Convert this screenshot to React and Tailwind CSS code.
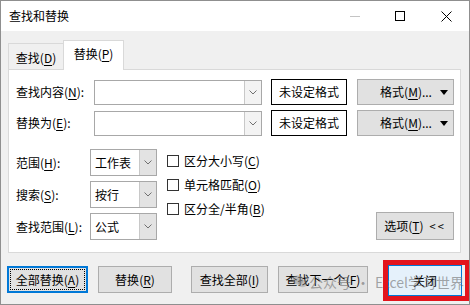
import React from "react";

const font = { fontFamily: '"Noto Sans CJK SC", "Noto Sans", sans-serif' };

function Chevron() {
  return (
    <svg width="8" height="5" viewBox="0 0 8 5" fill="none">
      <path d="M0.5 0.5 L4 4 L7.5 0.5" stroke="#707070" strokeWidth="1" />
    </svg>
  );
}

function Key({ k }) {
  return (
    <>
      (<u className="underline-offset-2">{k}</u>)
    </>
  );
}

function Combo({ w, h, text, editable }) {
  return (
    <div className={`flex ${w} ${h} border border-[#a8a8a8] bg-white`}>
      <div className="flex-1 flex items-center pl-[4px] text-[12px]">{text}</div>
      <div
        className={`w-[17px] flex items-center justify-center border-l border-[#c8c8c8] ${
          editable ? "bg-[#f3f3f3]" : "bg-[#e3e3e3]"
        }`}
      >
        <Chevron />
      </div>
    </div>
  );
}

function FormatButton() {
  return (
    <div className="w-[97px] h-[26px] ml-[10px] flex items-center bg-[#e1e1e1] border border-[#adadad] text-[12px]">
      <span className="flex-1 text-center pl-[14px]">
        格式<Key k="M" />...
      </span>
      <svg width="8" height="5" viewBox="0 0 8 5" className="mr-[5px]">
        <path d="M0 0 H8 L4 5 Z" fill="#000" />
      </svg>
    </div>
  );
}

function Checkbox({ label, k }) {
  return (
    <div className="h-[24px] flex items-center text-[12px]">
      <div className="w-[12px] h-[12px] border border-[#333] bg-white mr-[5px]" />
      <span>
        {label}
        <Key k={k} />
      </span>
    </div>
  );
}

function Btn({ children, className }) {
  return (
    <div
      className={`h-[27px] flex items-center justify-center bg-[#e1e1e1] border border-[#adadad] text-[12px] ${className}`}
    >
      {children}
    </div>
  );
}

export default function App() {
  return (
    <div
      className="relative w-[470px] h-[305px] flex flex-col border border-[#8f8f8f] overflow-hidden text-black"
      style={font}
    >
      {/* title bar */}
      <div className="h-[30px] bg-white flex items-center">
        <span className="pl-[8px] text-[12px]">查找和替换</span>
        <div className="ml-auto flex items-center">
          <div className="w-[10px] h-px bg-[#c4c4c4] mr-[35px]" />
          <div className="w-[10px] h-[10px] border border-black mr-[36px]" />
          <svg width="11" height="11" viewBox="0 0 11 11" className="mr-[17px]">
            <path d="M0.5 0.5 L10.5 10.5 M10.5 0.5 L0.5 10.5" stroke="#000" strokeWidth="1" />
          </svg>
        </div>
      </div>

      {/* body */}
      <div className="flex-1 bg-[#f0f0f0] px-[7px] flex flex-col">
        {/* tabs */}
        <div className="flex items-end h-[30px] mt-[9px] -mb-px">
          <div className="w-[56px] h-[27px] border border-b-0 border-[#d9d9d9] flex items-center justify-center text-[12px] pt-[1px]">
            查找<Key k="D" />
          </div>
          <div className="relative z-10 w-[61px] h-[30px] -ml-px bg-white border border-b-0 border-[#d9d9d9] flex items-center justify-center text-[12px] pb-[3px]">
            替换<Key k="P" />
          </div>
        </div>

        {/* panel */}
        <div className="w-[453px] h-[184px] bg-white border border-[#d9d9d9] flex flex-col pl-[7px] pt-[9px]">
          <div className="flex items-center h-[26px]">
            <span className="w-[78px] text-[12px]">
              查找内容<Key k="N" />:
            </span>
            <Combo w="w-[168px]" h="h-[25px]" editable />
            <div className="w-[76px] h-[26px] ml-[9px] border border-black flex items-center justify-center text-[12px]">
              未设定格式
            </div>
            <FormatButton />
          </div>
          <div className="flex items-center h-[26px] mt-[5px]">
            <span className="w-[78px] text-[12px]">
              替换为<Key k="E" />:
            </span>
            <Combo w="w-[168px]" h="h-[25px]" editable />
            <div className="w-[76px] h-[26px] ml-[9px] border border-black flex items-center justify-center text-[12px]">
              未设定格式
            </div>
            <FormatButton />
          </div>

          <div className="flex flex-1 mt-[13px]">
            <div className="flex flex-col gap-[5px]">
              {[
                ["范围", "H", "工作表"],
                ["搜索", "S", "按行"],
                ["查找范围", "L", "公式"],
              ].map(([l, k, v]) => (
                <div key={k} className="flex items-center h-[27px]">
                  <span className="w-[74px] text-[12px]">
                    {l}
                    <Key k={k} />:
                  </span>
                  <Combo w="w-[67px]" h="h-[27px]" text={v} />
                </div>
              ))}
            </div>
            <div className="flex flex-col ml-[10px]">
              <Checkbox label="区分大小写" k="C" />
              <Checkbox label="单元格匹配" k="O" />
              <Checkbox label="区分全/半角" k="B" />
            </div>
            <div className="ml-auto self-end mb-[12px] mr-[6px]">
              <Btn className="w-[78px] h-[28px] gap-[6px]">
                <span>
                  选项<Key k="T" />
                </span>
                <span className="text-[11px] tracking-[2px]">&lt;&lt;</span>
              </Btn>
            </div>
          </div>
        </div>

        {/* buttons */}
        <div className="flex items-start mt-[13px] -ml-px">
          <div className="relative w-[81px] h-[27px] flex items-center justify-center bg-[#e1e1e1] border-2 border-[#0078d7] text-[12px]">
            <div className="absolute inset-[1px] border border-dotted border-black" />
            全部替换<Key k="A" />
          </div>
          <Btn className="w-[74px] ml-[10px]">
            替换<Key k="R" />
          </Btn>
          <Btn className="w-[77px] ml-[19px]">
            查找全部<Key k="I" />
          </Btn>
          <Btn className="w-[90px] ml-[10px]">
            查找下一个<Key k="F" />
          </Btn>
          <div className="w-[74px] h-[31px] ml-[20px] -mt-[1px] flex items-center justify-center bg-[#e5f1fb] border border-[#0078d7] text-[12px]">
            关闭
          </div>
        </div>
      </div>

      {/* watermark */}
      <div className="absolute left-[291px] top-[273px] flex items-center leading-none text-[14px] text-[rgba(110,110,110,0.6)] pointer-events-none whitespace-nowrap">
        <svg width="16" height="15" viewBox="0 0 16 15" className="mr-[1px]">
          <ellipse cx="6" cy="6" rx="5.5" ry="4.5" fill="rgba(140,140,140,0.5)" />
          <ellipse cx="10.5" cy="9.5" rx="4.5" ry="3.8" fill="rgba(140,140,140,0.4)" />
        </svg>
        <span>公众号</span>
        <span className="mx-[5px]">·</span>
        <span>Excel学习世界</span>
      </div>

      {/* red annotation */}
      <div className="absolute left-[382px] top-[259px] w-[87px] h-[41px] border-[5px] border-[#e3141d] pointer-events-none" />
    </div>
  );
}
